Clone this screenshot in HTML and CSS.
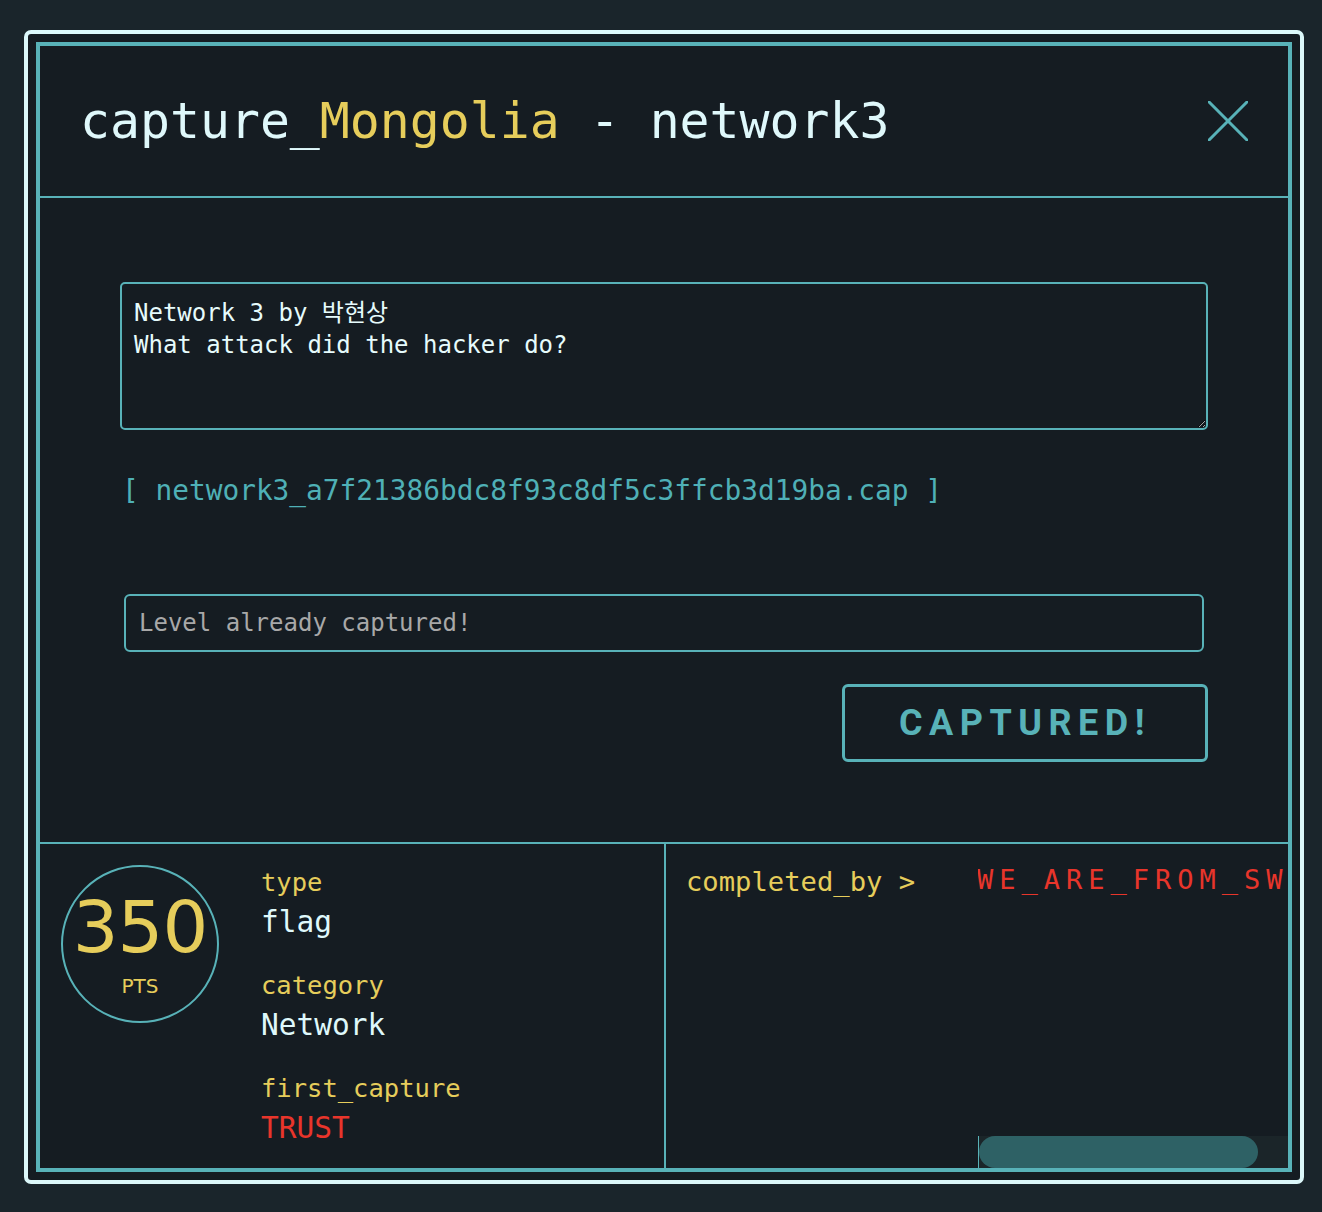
FILE: index.html
```html
<!DOCTYPE html>
<html>
<head>
<meta charset="utf-8">
<link rel="stylesheet" href="styles.css">
</head>
<body>
<div class="frame">
  <div class="modal">
    <header class="head">
      <h1 class="title">capture_<span class="yel">Mongolia</span> - network3</h1>
      <svg class="close" width="40" height="40" viewBox="0 0 40 40"><path d="M1 1 L39 39 M39 1 L1 39" stroke="#58b2b8" stroke-width="3" stroke-linecap="round" fill="none"/></svg>
    </header>
    <section class="body">
      <textarea class="desc" readonly>Network 3 by 박현상
What attack did the hacker do?</textarea>
      <div class="file">[ network3_a7f21386bdc8f93c8df5c3ffcb3d19ba.cap ]</div>
      <input class="flag" type="text" placeholder="Level already captured!" readonly>
      <div class="actions"><button class="btn">CAPTURED!</button></div>
    </section>
    <footer class="foot">
      <div class="info">
        <div class="points">
          <div class="num">350</div>
          <div class="pts">PTS</div>
        </div>
        <dl class="meta">
          <div class="group"><dt>type</dt><dd>flag</dd></div>
          <div class="group"><dt>category</dt><dd>Network</dd></div>
          <div class="group"><dt>first_capture</dt><dd class="red">TRUST</dd></div>
        </dl>
      </div>
      <div class="solvers">
        <div class="solved-label">completed_by &gt;</div>
        <div class="names">
          <div class="names-list"><span class="name">WE_ARE_FROM_SWEDEN</span></div>
          <div class="scrollbar"><div class="thumb"></div></div>
        </div>
      </div>
    </footer>
  </div>
</div>
</body>
</html>
```

FILE: styles.css
```css
* { box-sizing: border-box; }
html, body { margin: 0; }
body {
  background: #1a252b;
  padding: 30px 18px 28px 24px;
  font-family: "DejaVu Sans Mono", monospace;
  color: #dff8fb;
}
.frame {
  width: 1280px;
  height: 1154px;
  border: 4px solid #dcf8fa;
  border-radius: 7px;
  background: #151c22;
  padding: 8px;
}
.modal {
  border: 4px solid #58b2b8;
  height: 100%;
  display: flex;
  flex-direction: column;
}
.head {
  height: 152px;
  display: flex;
  align-items: center;
  justify-content: space-between;
  padding: 0 40px 0 42px;
  border-bottom: 2px solid #58b2b8;
  flex: none;
}
.title {
  margin: 0;
  font-family: "DejaVu Sans Mono", monospace;
  font-weight: normal;
  font-size: 49.8px;
  color: #dff8fb;
  margin-left: -2px;
}
.yel { color: #e6cd5b; }
.close { display: block; }
.body {
  height: 646px;
  padding: 84px 80px 0 80px;
  border-bottom: 2px solid #58b2b8;
  flex: none;
}
.desc {
  display: block;
  width: 1088px;
  height: 148px;
  background: #151c22;
  border: 2px solid #58b2b8;
  border-radius: 5px;
  padding: 13px 12px;
  font-family: "DejaVu Sans Mono", "Noto Sans CJK KR", monospace;
  font-size: 24px;
  line-height: 32px;
  color: #e6fbfc;
  resize: both;
  outline: none;
  margin: 0;
}
.file {
  margin: 41px 0 0 2px;
  line-height: 40px;
  font-size: 27.8px;
  color: #4fb0b6;
}
.flag {
  display: block;
  margin: 83px 0 0 4px;
  width: 1080px;
  height: 58px;
  background: #151c22;
  border: 2px solid #58b2b8;
  border-radius: 6px;
  padding: 0 13px;
  font-family: "DejaVu Sans Mono", monospace;
  font-size: 24px;
  color: #a8a8a8;
  outline: none;
}
.flag::placeholder { color: #a8a8a8; opacity: 1; }
.actions {
  display: flex;
  justify-content: flex-end;
  margin-top: 32px;
}
.btn {
  width: 366px;
  height: 78px;
  border: 3px solid #58b2b8;
  border-radius: 6px;
  background: transparent;
  color: #58b2b8;
  font-family: Roboto, "DejaVu Sans", sans-serif;
  font-weight: 700;
  font-size: 36px;
  letter-spacing: 6.5px;
  padding: 0 0 0 0;
}
.foot {
  flex: 1;
  display: flex;
  min-height: 0;
}
.info {
  width: 626px;
  border-right: 2px solid #58b2b8;
  display: flex;
  align-items: flex-start;
  padding: 21px 0 0 21px;
  flex: none;
}
.points {
  width: 158px;
  height: 158px;
  border: 2px solid #58b2b8;
  border-radius: 50%;
  display: flex;
  flex-direction: column;
  align-items: center;
  flex: none;
}
.num {
  font-family: "DejaVu Sans", sans-serif;
  font-size: 72px;
  line-height: 1;
  color: #e6cd5b;
  margin-top: 24px;
  letter-spacing: -1px;
}
.pts {
  font-family: "DejaVu Sans", sans-serif;
  font-size: 20px;
  color: #e6cd5b;
  margin-top: 11px;
}
.meta {
  margin: -1px 0 0 42px;
  display: flex;
  flex-direction: column;
  gap: 23px;
}
.group { display: flex; flex-direction: column; }
dt {
  font-size: 25.5px;
  line-height: 36px;
  color: #e6cd5b;
}
dd {
  margin: 0;
  font-size: 29.5px;
  line-height: 44px;
  color: #dff8fb;
}
.red { color: #e8352b; }
.solvers {
  flex: 1;
  display: flex;
  min-width: 0;
}
.solved-label {
  width: 312px;
  padding: 20px 0 0 20px;
  font-size: 27.2px;
  line-height: 36px;
  color: #e6cd5b;
  flex: none;
}
.names {
  flex: 1;
  min-width: 0;
  display: flex;
  flex-direction: column;
  overflow: hidden;
}
.names-list {
  flex: 1;
  padding-top: 18px;
  white-space: nowrap;
  overflow: hidden;
}
.name {
  font-size: 27px;
  line-height: 36px;
  letter-spacing: 6px;
  color: #e8352b;
  margin-left: -1px;
}
.scrollbar {
  height: 32px;
  border-left: 1px solid #58b2b8;
  background: #1b2529;
  flex: none;
}
.thumb {
  width: 279px;
  height: 100%;
  border-radius: 16px;
  background: #2e6165;
}
```
